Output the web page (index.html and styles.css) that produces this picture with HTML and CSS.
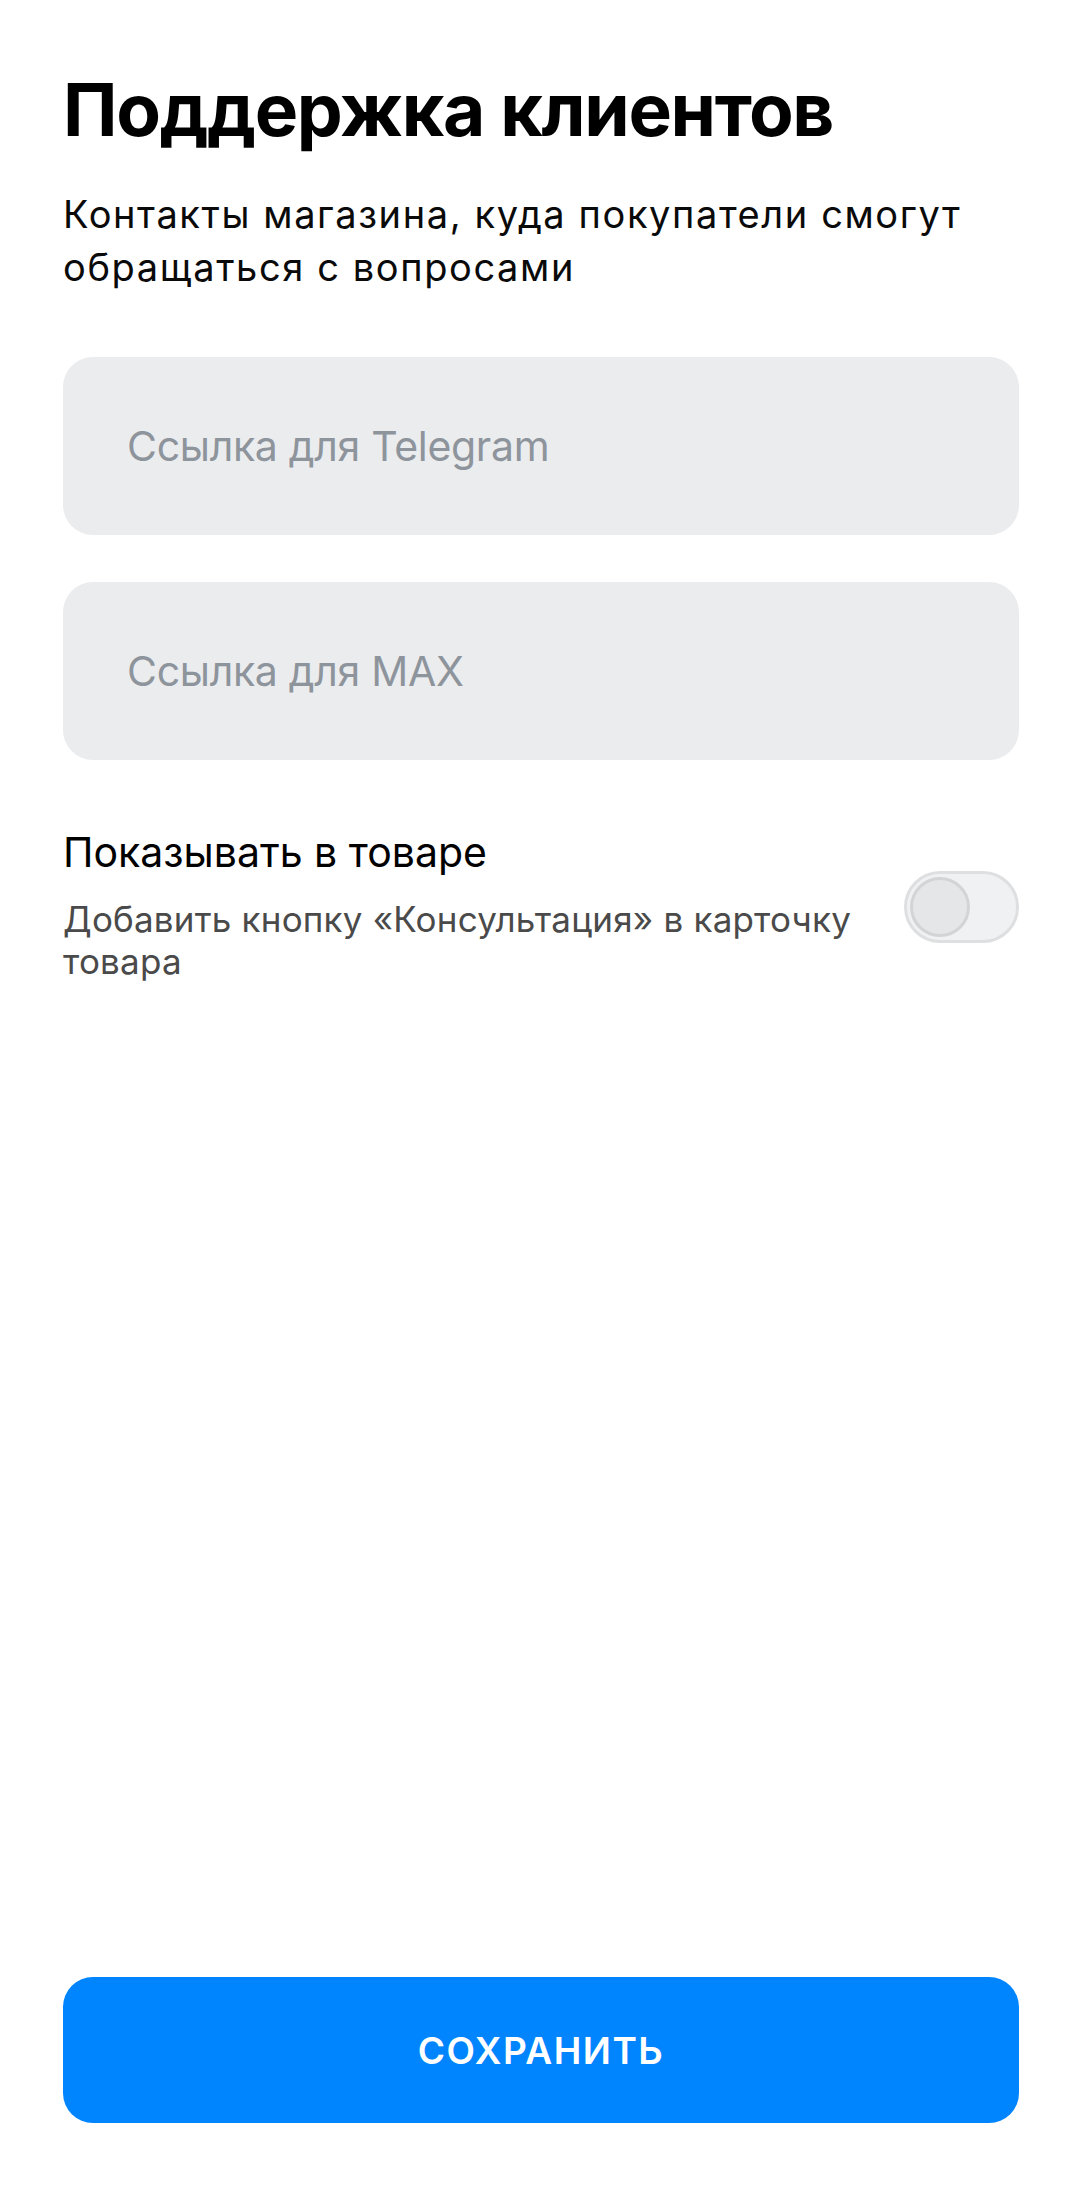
FILE: index.html
```html
<!DOCTYPE html>
<html lang="ru">
<head>
  <meta charset="utf-8">
  <meta name="viewport" content="width=device-width, initial-scale=1">
  <title>Поддержка клиентов</title>
  <link rel="stylesheet" href="styles.css">
</head>
<body>

  <main class="page">
    <h1 class="page-title">Поддержка клиентов</h1>
    <p class="page-lead">Контакты магазина, куда покупатели смогут обращаться с вопросами</p>

    <div class="fields">
      <input class="field" type="text" placeholder="Ссылка для Telegram">
      <input class="field" type="text" placeholder="Ссылка для MAX">
    </div>

    <div class="option">
      <div class="option-text">
        <div class="option-title">Показывать в товаре</div>
        <div class="option-desc">Добавить кнопку «Консультация» в карточку товара</div>
      </div>
      <label class="switch">
        <input type="checkbox">
        <span class="switch-knob"></span>
      </label>
    </div>

    <button class="save-button" type="button">Сохранить</button>
  </main>

</body>
</html>
```

FILE: styles.css
```css
/* General Styling */
* {
  box-sizing: border-box;
}

html, body {
  margin: 0;
  padding: 0;
  height: 100%;
}

body {
  font-family: Inter, "Noto Sans", sans-serif;
  background-color: #fff;
  color: #000;
}

.page {
  display: flex;
  flex-direction: column;
  min-height: 100vh;
  padding: 66px 63px 79px;
}

.page-title {
  margin: 0;
  font-size: 73px;
  line-height: 88px;
  font-weight: 700;
  letter-spacing: -1.3px;
}

.page-lead {
  margin: 34px 0 0;
  font-size: 38px;
  line-height: 53px;
  letter-spacing: 1.6px;
  color: #0a0a0a;
}

/* Inputs */
.fields {
  display: flex;
  flex-direction: column;
  gap: 47px;
  margin-top: 63px;
}

.field {
  display: block;
  width: 100%;
  height: 178px;
  padding: 0 64px;
  border: none;
  border-radius: 30px;
  background-color: #ebecee;
  font-family: inherit;
  font-size: 41px;
  letter-spacing: -0.3px;
  color: #000;
  outline: none;
}

.field::placeholder {
  color: #8e949c;
}

/* Toggle row */
.option {
  display: flex;
  align-items: center;
  gap: 30px;
  margin-top: 66px;
}

.option-text {
  flex: 1;
}

.option-title {
  font-size: 41px;
  line-height: 52px;
}

.option-desc {
  margin-top: 20px;
  font-size: 35px;
  line-height: 42px;
  letter-spacing: 0.2px;
  color: #4a4a4a;
}

.switch {
  position: relative;
  flex: none;
  width: 115px;
  height: 72px;
  margin-top: 6px;
  border: 3px solid #dedfe1;
  border-radius: 36px;
  background-color: #f0f1f3;
}

.switch input {
  display: none;
}

.switch-knob {
  position: absolute;
  top: 3px;
  left: 3px;
  width: 60px;
  height: 60px;
  border: 3px solid #d3d4d6;
  border-radius: 50%;
  background-color: #e5e6e8;
}

/* Save button */
.save-button {
  margin-top: auto;
  width: 100%;
  height: 146px;
  border: none;
  border-radius: 30px;
  background-color: #0185ff;
  color: #fff;
  font-family: inherit;
  font-size: 37px;
  font-weight: 600;
  letter-spacing: 1.5px;
  text-transform: uppercase;
  cursor: pointer;
}
```
